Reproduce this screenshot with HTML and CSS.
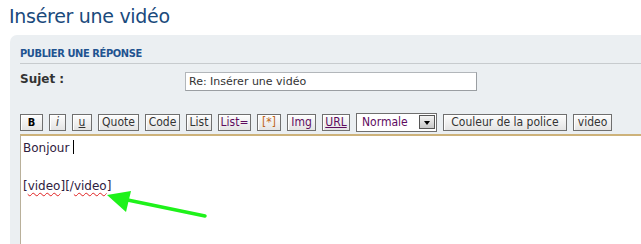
FILE: index.html
```html
<!DOCTYPE html>
<html>
<head>
    <title>Insérer une vidéo</title>
    <link rel="stylesheet" href="styles.css">
</head>
<body>
    <h2 class="title">Insérer une vidéo</h2>

    <div class="panel">
        <h3 class="panel-head">PUBLIER UNE RÉPONSE</h3>

        <div class="field">
            <label class="field-label">Sujet :</label>
            <div class="input">Re: Insérer une vidéo</div>
        </div>

        <div class="toolbar">
            <span class="btn b">B</span>
            <span class="btn i">i</span>
            <span class="btn u">u</span>
            <span class="btn quote">Quote</span>
            <span class="btn code">Code</span>
            <span class="btn list">List</span>
            <span class="btn purple list-eq">List=</span>
            <span class="btn orange star">[*]</span>
            <span class="btn purple img">Img</span>
            <span class="btn purple url">URL</span>
            <span class="select">Normale <span class="arrow"></span></span>
            <span class="btn color">Couleur de la police</span>
            <span class="btn video">video</span>
        </div>

        <div class="editor">
            <div class="line">Bonjour <span class="caret"></span></div>
            <div class="line">&nbsp;</div>
            <div class="line">[<span class="typo">video</span>][/<span class="typo">video</span>]</div>
        </div>
    </div>

    <!-- green arrow drawn over the screenshot -->
    <svg class="pointer" width="641" height="244" viewBox="0 0 641 244">
        <line x1="205" y1="216" x2="118" y2="198" stroke="#1ef21a" stroke-width="3.5" stroke-linecap="round"/>
        <polygon points="107,195 131,191 126,212" fill="#1ef21a"/>
    </svg>
</body>
</html>
```

FILE: styles.css
```css
* {
    margin: 0;
    padding: 0;
    box-sizing: border-box;
}

body {
    background: #fff;
    font-family: "DejaVu Sans", Verdana, sans-serif;
    width: 641px;
    height: 244px;
    overflow: hidden;
    position: relative;
}

h2.title {
    font-weight: normal;
    font-size: 19px;
    color: #1a4a7c;
    padding: 5px 0 0 9px;
    height: 35px;
    letter-spacing: -0.3px;
}

div.panel {
    margin-left: 10px;
    background: #ebeff2;
    border-top-left-radius: 7px;
    padding: 10px 0 0 10px;
    height: 209px;
    overflow: hidden;
}

h3.panel-head {
    font-family: "DejaVu Sans Condensed", "DejaVu Sans", sans-serif;
    font-size: 11px;
    color: #1f5390;
    font-weight: bold;
    border-bottom: 1px solid #c7cbce;
    padding: 2px 0 3px 0;
    letter-spacing: -0.4px;
}

div.field {
    display: flex;
    align-items: center;
    margin-top: 7px;
    height: 20px;
}

.field-label {
    width: 165px;
    font-size: 12px;
    font-weight: bold;
    color: #333;
    margin-top: -4px;
}

div.input {
    width: 292px;
    height: 19px;
    border: 1px solid #b2b6ba;
    border-right-color: #9a9ea2;
    border-bottom-color: #9a9ea2;
    background: #fff;
    font-size: 11px;
    color: #333;
    padding: 2px 0 0 3px;
}

div.toolbar {
    display: flex;
    align-items: center;
    gap: 6px;
    margin-top: 22px;
    height: 18px;
    font-family: "DejaVu Sans Condensed", "DejaVu Sans", sans-serif;
}

.btn {
    display: inline-block;
    height: 17px;
    line-height: 15px;
    font-size: 12px;
    color: #333;
    text-align: center;
    border: 1px solid #6f6f6f;
    background: linear-gradient(#fdfdfd, #e4e4e4);
    box-shadow: inset 1px 1px 0 #fff;
    white-space: nowrap;
}

.btn.b { font-weight: bold; color: #000; font-size: 11px; width: 23px; }
.btn.i { font-style: italic; width: 17px; }
.btn.u { text-decoration: underline; width: 20px; }
.btn.quote { width: 41px; }
.btn.code { width: 35px; }
.btn.list { width: 26px; }
.btn.list-eq { width: 33px; }
.btn.star { width: 24px; }
.btn.img { width: 29px; }
.btn.url { text-decoration: underline; width: 28px; }
.btn.color { width: 124px; }
.btn.video { width: 39px; }
.btn.purple { color: #5e0b5e; }
.btn.orange { color: #c0661a; }

.select {
    display: inline-flex;
    align-items: center;
    justify-content: space-between;
    width: 81px;
    height: 19px;
    font-size: 12px;
    color: #5e0b5e;
    background: #fff;
    border: 1px solid #6f6f6f;
    padding: 0 1px 0 5px;
}

.select .arrow {
    width: 16px;
    height: 14px;
    border: 1px solid #555;
    background: linear-gradient(#f4f4f4, #c8c8c8);
    position: relative;
}

.select .arrow::after {
    content: "";
    position: absolute;
    left: 4px;
    top: 5px;
    border-left: 3px solid transparent;
    border-right: 3px solid transparent;
    border-top: 4px solid #000;
}

div.editor {
    margin-top: 3px;
    background: #fff;
    border-top: 2px solid #cdb27a;
    border-left: 1px solid #b9b09a;
    height: 120px;
    padding: 3px 0 0 2px;
    font-size: 12px;
    color: #2f2140;
    line-height: 19px;
}

.caret {
    display: inline-block;
    width: 1px;
    height: 14px;
    background: #000;
    vertical-align: -2px;
}

.typo {
    text-decoration: underline wavy #e02020;
    text-decoration-thickness: 1px;
    text-underline-offset: 2px;
}

svg.pointer {
    position: absolute;
    left: 0;
    top: 0;
    pointer-events: none;
}
```
